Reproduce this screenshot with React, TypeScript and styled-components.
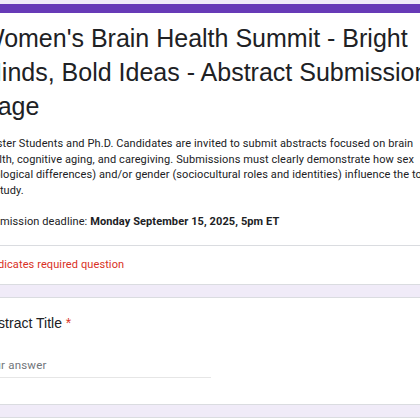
import React from "react";
import styled, { createGlobalStyle } from "styled-components";

const GlobalStyle = createGlobalStyle`
  html, body {
    margin: 0;
    padding: 0;
    background: #f0ebf8;
    overflow: hidden;
  }
`;

const Page = styled.div`
  width: 420px;
  height: 420px;
  overflow: hidden;
  padding-top: 4px;
  box-sizing: border-box;
`;

const Column = styled.div`
  width: 513px;
  margin-left: -44px;
  display: flex;
  flex-direction: column;
  gap: 12px;
`;

const Card = styled.div<{ $accent?: boolean }>`
  background: #fff;
  border: 1px solid #dadce0;
  border-radius: 8px;
  overflow: hidden;
  box-sizing: border-box;
  ${(p) => (p.$accent ? "border-top: 9px solid #673ab7;" : "")}
`;

const Head = styled.div`
  padding: 8px 24px 15px;
`;

const Title = styled.h1`
  margin: 0;
  font-family: "Liberation Sans", Arial, sans-serif;
  font-weight: 400;
  font-size: 25px;
  line-height: 34px;
  color: #202124;
`;

const Desc = styled.p`
  margin: 13px 0 0;
  font-family: Roboto, "Liberation Sans", sans-serif;
  font-size: 11px;
  line-height: 15.5px;
  color: #202124;
  letter-spacing: 0.1px;
`;

const Deadline = styled(Desc)`
  margin-top: 16px;
  b {
    font-weight: 700;
  }
`;

const Divider = styled.div`
  height: 1px;
  background: #dadce0;
`;

const Required = styled.div`
  padding: 11px 24px 12px;
  font-family: Roboto, "Liberation Sans", sans-serif;
  font-size: 11px;
  line-height: 15.5px;
  color: #d93025;
  letter-spacing: 0.1px;
`;

const Question = styled.div`
  padding: 15px 24px 24px;
  height: 106px;
  box-sizing: border-box;
`;

const QTitle = styled.div`
  font-family: "Liberation Sans", Arial, sans-serif;
  font-size: 14px;
  line-height: 20px;
  color: #202124;
`;

const Star = styled.span`
  color: #d93025;
`;

const Answer = styled.div`
  margin-top: 25px;
  width: 230px;
  padding-bottom: 3px;
  border-bottom: 1px solid #e6e6e6;
  font-family: Roboto, "Liberation Sans", sans-serif;
  font-size: 11.5px;
  line-height: 15.5px;
  color: #70757a;
  letter-spacing: 0.2px;
`;

export default function App() {
  return (
    <>
      <GlobalStyle />
      <Page>
        <Column>
          <Card $accent>
            <Head>
              <Title>
                Women's Brain Health Summit - Bright Minds, Bold Ideas - Abstract Submission Page
              </Title>
              <Desc>
                Master Students and Ph.D. Candidates are invited to submit abstracts focused on brain
                health, cognitive aging, and caregiving. Submissions must clearly demonstrate how sex
                (biological differences) and/or gender (sociocultural roles and identities) influence
                the topic of study.
              </Desc>
              <Deadline>
                Submission deadline: <b>Monday September 15, 2025, 5pm ET</b>
              </Deadline>
            </Head>
            <Divider />
            <Required>* Indicates required question</Required>
          </Card>
          <Card>
            <Question>
              <QTitle>
                Abstract Title <Star>*</Star>
              </QTitle>
              <Answer>Your answer</Answer>
            </Question>
          </Card>
          <Card>
            <Question />
          </Card>
        </Column>
      </Page>
    </>
  );
}
